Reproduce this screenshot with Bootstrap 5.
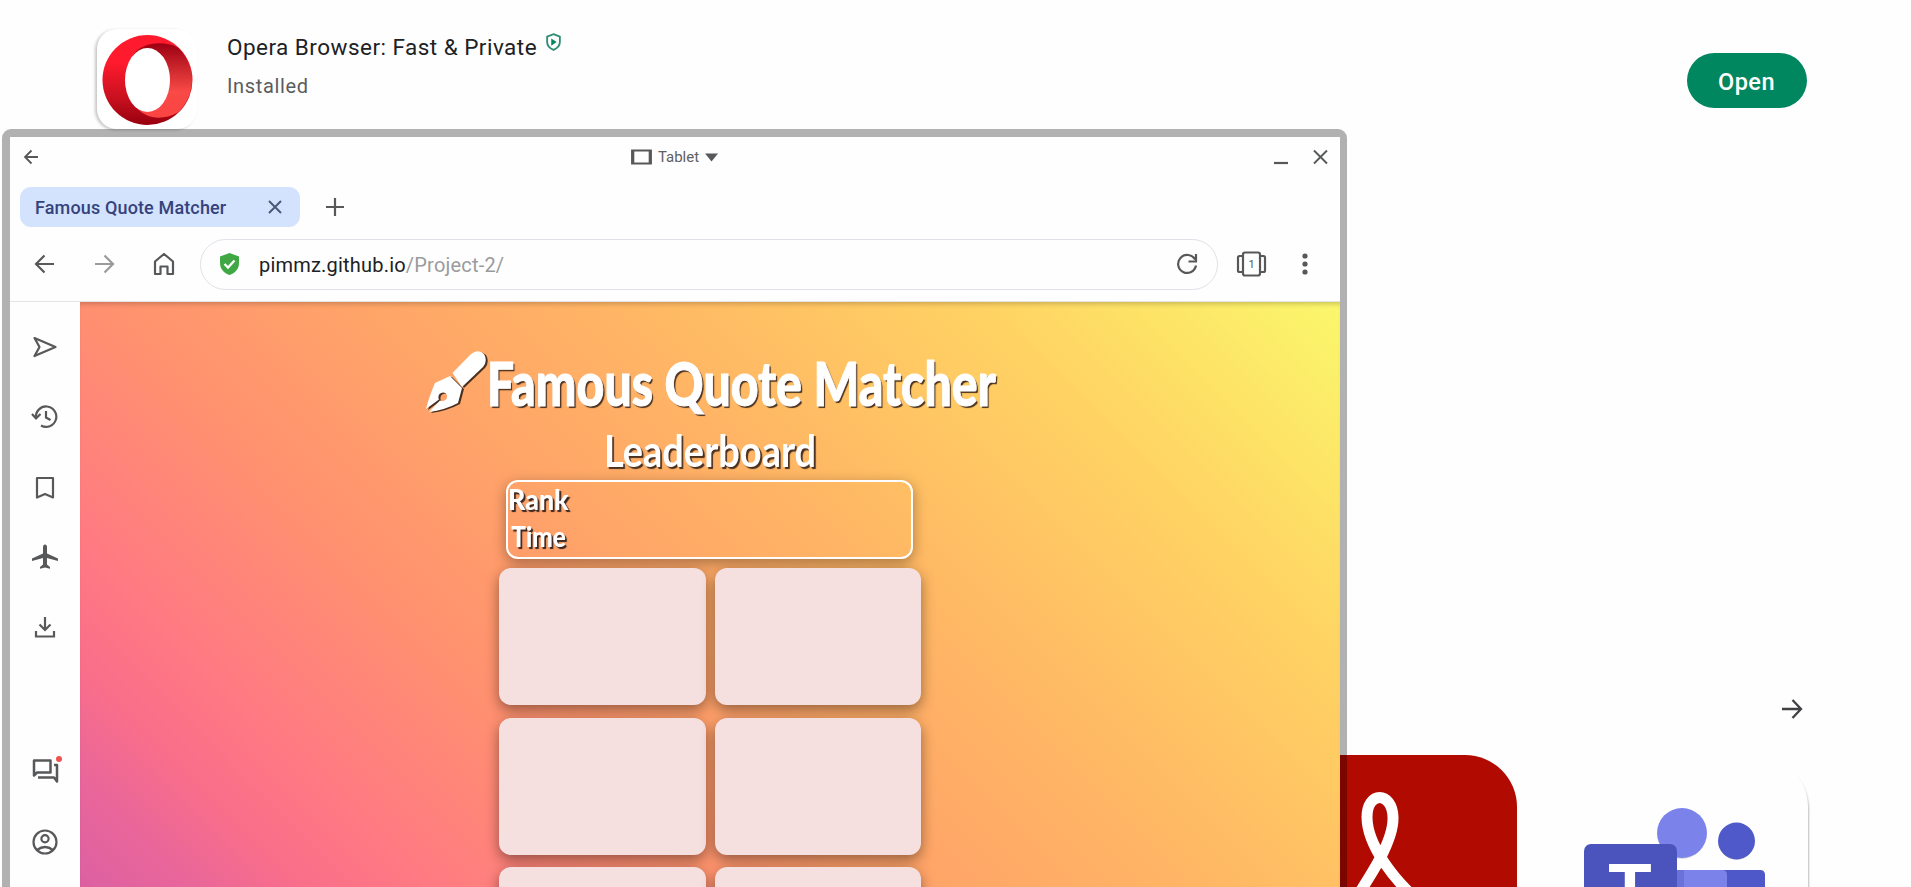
<!DOCTYPE html>
<html lang="en">
<head>
<meta charset="utf-8">
<meta name="viewport" content="width=device-width, initial-scale=1">
<title>Opera Browser: Fast &amp; Private</title>
<link href="https://cdn.jsdelivr.net/npm/bootstrap@5.3.0/dist/css/bootstrap.min.css" rel="stylesheet">
<style>
  body { background: #fefefe; font-family: Roboto, sans-serif; color: #202124; }
  svg { display: block; flex: none; }
  .ico { fill: none; stroke: #57585a; stroke-width: 2.2; }
  .store-head { padding: 29px 104px 0 97px; height: 129px; }
  .app-logo { width: 100px; height: 100px; border-radius: 20px; background: #fff; box-shadow: -2px 1px 3px rgba(0,0,0,.22); padding: 6px 5px; }
  .app-info { margin-left: 30px; }
  .app-name { font-size: 22.5px; line-height: 36px; letter-spacing: .47px; }
  .app-state { font-size: 20px; line-height: 30px; margin-top: 6px; color: #5a5c60; letter-spacing: .65px; }
  .open-btn { width: 120px; height: 55px; margin-top: 24px; border-radius: 28px; background: #01875f; color: #fff; font-size: 23.5px; font-weight: 500; letter-spacing: .5px; padding: 4px 1px 0 0; border: 0; }
  .open-btn:hover { background: #01704f; color: #fff; }
  .more { padding-right: 108px; margin-bottom: 36px; }
  .tiles { padding-right: 103px; gap: 63px; height: 132px; }
  .tile { width: 228px; height: 228px; border-radius: 52px; overflow: hidden; }
  .tile-teams { background: #fefefe; box-shadow: 2px 3px 2px -1px rgba(0,0,0,.26); }

  .win { left: 2px; top: 129px; width: 1345px; height: 780px; border: 8px solid rgba(0,0,0,.3); border-right-width: 7px; border-radius: 9px 9px 0 0; }
  .win-in { background: #fefefe; height: 100%; }
  .title-bar { height: 50px; padding: 0 12px 10px 13px; }
  .mode { font-size: 15px; color: #5f6062; gap: 6px; padding-left: 2px; }
  .tab-row { height: 40px; padding-left: 10px; gap: 26px; }
  .tab-pill { width: 280px; height: 40px; border-radius: 11px; background: #d3e3fd; color: #35427c; font-size: 18px; font-weight: 500; padding: 0 18px 0 15px; letter-spacing: .14px; }
  .nav-row { height: 75px; border-bottom: 1px solid #e4e4e6; padding: 0 32px 0 24px; }
  .url { width: 1018px; height: 51px; border: 1px solid #dfe2e8; border-radius: 26px; margin-left: 25px; padding: 0 19px 0 19px; font-size: 20px; letter-spacing: .2px; }
  .url-path { color: #9a9b9d; }
  .rail { width: 70px; }
  .rail-top { padding-top: 30px; gap: 40px; }
  .rail-low { padding-top: 114px; gap: 41px; }
  .site { height: 585px; overflow: hidden; color: #fff; font-family: Lato, sans-serif; box-shadow: inset 0 5px 5px -3px rgba(0,0,0,.2);
    background: linear-gradient(45deg, #dc60a2 0%, #e9669a 6%, #f96e8a 12%, #ff7a82 19%, #ff9070 32%, #ffa568 47%, #ffb964 63%, #ffd463 81%, #fbf26a 97%, #fbf76c 100%); }
  .squeeze { display: inline-block; white-space: nowrap; transform-origin: 0 50%; }
  .site h1 { margin: 45px 0 0 345px; font-size: 60px; font-weight: 900; line-height: 72px; height: 68px; text-shadow: 2px 2px 1px #4a3020; -webkit-text-stroke: 1px #fff; }
  .site h2 { margin: 9px 0 0 524px; font-size: 43px; font-weight: 700; line-height: 54px; text-shadow: 2px 2px 1px #4a3020; }
  .board { width: 407px; height: 79px; margin: 2px 0 0 426px; border: 2px solid #fff; border-radius: 12px; box-shadow: 0 4px 14px rgba(0,0,0,.35); font-size: 29px; font-weight: 900; line-height: 36.5px; text-shadow: 2px 2px 1px #3a2520; }
  .board > div:first-child { margin-top: -1px; }
  .deck { display: grid; grid-template-columns: 207px 206px; grid-auto-rows: 137px; gap: 12.5px 9px; margin: 9px 0 0 419px; }
  .deck div { background: #f5e0df; border-radius: 12px; box-shadow: 0 5px 14px rgba(0,0,0,.42); }
</style>
</head>
<body class="vh-100 overflow-hidden">
<main class="d-flex flex-column vh-100 position-relative overflow-hidden">
  <header class="store-head d-flex align-items-start">
    <div class="app-logo">
      <svg width="91" height="90" viewBox="0 0 91 90">
        <defs>
          <linearGradient id="oa" x1="0" y1="0" x2="0" y2="1"><stop offset=".3" stop-color="#ff1b2d"/><stop offset=".7" stop-color="#c8101f"/><stop offset="1" stop-color="#98000e"/></linearGradient>
          <linearGradient id="ob" x1="0" y1="0" x2="0" y2="1"><stop offset="0" stop-color="#9c0012"/><stop offset=".65" stop-color="#f84a46"/><stop offset="1" stop-color="#fb4442"/></linearGradient>
        </defs>
        <circle cx="45.500" cy="45" r="45" fill="url(#oa)"/>
        <path fill="url(#ob)" d="M32 19C40 8 60 5 76 12.500A45 45 0 0 1 76 77.500C60 86 44 84 34 72z"/>
        <ellipse cx="45.500" cy="45" rx="22.500" ry="32" fill="#fff"/>
      </svg>
    </div>
    <div class="app-info">
      <div class="app-name d-flex">
        <span>Opera Browser: Fast &amp; Private</span>
        <svg class="ms-2 mt-1" width="17" height="20" viewBox="0 0 17 22"><path d="M8.500 1.300L15.500 4v6c0 4-3 7-7 8.600C4.500 17 1.500 14 1.500 10V4z" fill="none" stroke="#2c8c74" stroke-width="2"/><path d="M6 6l6 4-6 4z" fill="#01875f"/></svg>
      </div>
      <div class="app-state">Installed</div>
    </div>
    <button class="btn open-btn ms-auto">Open</button>
  </header>

  <section class="mt-auto">
    <div class="more d-flex justify-content-end">
      <svg width="22" height="20" viewBox="0 0 22 20"><path d="M1 10h18M11.500 1l8.500 9-8.500 9" fill="none" stroke="#404144" stroke-width="2.300"/></svg>
    </div>
    <div class="tiles d-flex justify-content-end">
      <div class="tile">
        <svg width="228" height="228" viewBox="0 0 228 228"><rect width="228" height="228" fill="#b10a00"/><path d="M56 160C78 126 105 88 104 62C103 36 78 36 78 62C78 88 102 126 146 160" fill="none" stroke="#fff" stroke-width="11"/></svg>
      </div>
      <div class="tile tile-teams">
        <svg width="228" height="228" viewBox="0 0 228 228">
          <ellipse cx="102" cy="82" rx="23" ry="22" fill="#ddd"/><circle cx="102" cy="78" r="25" fill="#7b83eb"/>
          <circle cx="156.500" cy="88" r="17" fill="#ddd"/><circle cx="156.500" cy="86" r="18.500" fill="#5059c9"/>
          <path d="M130 115h50q5 0 5 5v60h-55z" fill="#4f58c8"/><path d="M80 115h62q5 0 5 5v60H80z" fill="#7b83eb"/>
          <rect x="84" y="115" width="20" height="60" fill="#6a72d8"/>
          <rect x="4" y="89" width="93" height="93" rx="7" fill="#4b53bc"/>
          <text x="50" y="158" text-anchor="middle" font-family="Liberation Sans, sans-serif" font-size="71" font-weight="700" fill="#fff">T</text>
        </svg>
      </div>
    </div>
  </section>

  <div class="win position-absolute">
    <div class="win-in">
      <div class="title-bar d-flex align-items-center justify-content-between">
        <svg class="ico" width="50" height="16" viewBox="0 0 50 16"><path d="M15 8H2M8.500 1.500L2 8l6.500 6.500" stroke-width="1.800"/></svg>
        <div class="mode d-flex align-items-center">
          <svg width="21" height="16" viewBox="0 0 21 16"><path d="M1 1.500h19v13H1z" fill="none" stroke="#57585a" stroke-width="1.800"/><path d="M2 1v14M19 1v14" stroke="#57585a" stroke-width="2.600"/></svg>
          <span>Tablet</span>
          <svg width="13" height="9" viewBox="0 0 13 9"><path d="M0 .5h13L6.500 8.500z" fill="#57585a"/></svg>
        </div>
        <div class="d-flex">
          <svg class="ico" width="14" height="16" viewBox="0 0 14 16"><path d="M0 14h14"/></svg>
          <svg class="ico" width="15" height="16" viewBox="0 0 15 16" style="margin-left:25px"><path d="M1 1.500l13 13M14 1.500l-13 13" stroke-width="1.900"/></svg>
        </div>
      </div>
      <div class="tab-row d-flex align-items-center">
        <div class="tab-pill d-flex align-items-center justify-content-between">
          <span>Famous Quote Matcher</span>
          <svg width="14" height="14" viewBox="0 0 14 14"><path d="M1 1l12 12M13 1L1 13" stroke="#4d5878" stroke-width="2"/></svg>
        </div>
        <svg class="ico" width="18" height="18" viewBox="0 0 18 18"><path d="M9 0v18M0 9h18"/></svg>
      </div>
      <div class="nav-row d-flex align-items-center">
        <svg class="ico" width="20" height="20" viewBox="0 0 20 20"><path d="M20 10H2M10.500 1.500L2 10l8.500 8.500"/></svg>
        <svg class="ico" width="20" height="20" viewBox="0 0 20 20" style="margin-left:41px;opacity:.6"><path d="M0 10h18M9.500 1.500L18 10l-8.500 8.500"/></svg>
        <svg class="ico" width="22" height="24" viewBox="0 0 22 24" style="margin-left:38px"><path d="M2 9.500L11 2l9 7.500V22h-5.500v-7.500h-7V22H2z" stroke-linejoin="round"/></svg>
        <div class="url d-flex align-items-center">
          <svg width="19" height="22" viewBox="0 0 19 22"><path d="M9.500 0L19 3.500V10c0 6-4 10-9.500 12C4 20 0 16 0 10V3.500z" fill="#3fa845"/><path d="M4.500 11l3.500 3.500 6.500-7" fill="none" stroke="#fff" stroke-width="2.300"/></svg>
          <span style="margin-left:20px;padding-top:2px">pimmz.github.io<span class="url-path">/Project-2/</span></span>
          <svg class="ico ms-auto" width="22" height="22" viewBox="0 0 22 22"><path d="M19 6.500A9 9 0 1 0 20 12.500M20 1v7.500h-7.500"/></svg>
        </div>
        <svg class="ico ms-auto" width="31" height="26" viewBox="0 0 31 26"><rect x="7" y="1.500" width="17" height="23" rx="2"/><path d="M7 5H3.500Q2 5 2 6.500v13Q2 21 3.500 21H7M24 5h3.500Q29 5 29 6.500v13Q29 21 27.500 21H24"/><text x="15.500" y="17" text-anchor="middle" font-size="11" fill="#57585a" stroke="none">1</text></svg>
        <svg width="6" height="22" viewBox="0 0 6 22" style="margin-left:35px"><g fill="#57585a"><circle cx="3" cy="3" r="2.600"/><circle cx="3" cy="11" r="2.600"/><circle cx="3" cy="19" r="2.600"/></g></svg>
      </div>
      <div class="d-flex">
        <nav class="rail flex-shrink-0">
          <div class="rail-top d-flex flex-column align-items-center">
            <svg class="ico" width="30" height="30" viewBox="0 0 30 30"><path d="M4.500 6L25.500 15 4.500 24l5-9z" stroke-linejoin="round"/></svg>
            <svg class="ico" width="30" height="30" viewBox="0 0 30 30"><path d="M6 16a10.200 10.200 0 1 1 5 7.500M2 12l4 4.500 4.500-4.500M16 9v6.500l4.500 2.500"/></svg>
            <svg class="ico" width="30" height="30" viewBox="0 0 30 30"><path d="M7 6h16v19.500L15 22l-8 3.500z" stroke-linejoin="round"/></svg>
            <svg width="30" height="30" viewBox="0 0 30 30"><path d="M15 2.500q2 0 2 3v6l11 5V19L17 16v6.500l3 2.500v1.800l-5-1.300-5 1.300V25l3-2.500V16L2 19v-2.500l11-5v-6q0-3 2-3z" fill="#57585a"/></svg>
            <svg class="ico" width="30" height="30" viewBox="0 0 30 30"><path d="M15 5v12M9.500 12.500l5.500 5.500 5.500-5.500M6 19v5.500h18V19"/></svg>
          </div>
          <div class="rail-low d-flex flex-column align-items-center">
            <svg class="ico overflow-visible" width="30" height="30" viewBox="0 0 30 30"><path d="M4 4.500h16.500v12H7L4 19.500zM8 21.500h16l3 4V9h-3" stroke-linejoin="round" stroke-width="2.500"/><circle cx="29" cy="3" r="3" fill="#f0524f" stroke="none"/></svg>
            <svg class="ico" width="30" height="30" viewBox="0 0 30 30"><circle cx="15" cy="15" r="11.500"/><circle cx="15" cy="11.800" r="3.600"/><path d="M7 23q8-6 16 0"/></svg>
          </div>
        </nav>
        <div class="site flex-grow-1">
          <h1 class="d-flex align-items-start">
            <svg class="overflow-visible" width="62" height="62" viewBox="0 0 62 62" style="margin-top:4px;filter:drop-shadow(2px 1px 0 #4a3020)"><path fill="#fff" d="M27.500 22L45 4Q53-3 59 3q4 7-1 13L37 36z"/><path fill="#fff" fill-rule="evenodd" d="M25 25l12 12-4 15Q20 59 4 61L15 49.500q4 1.500 6.500-1.500 1.500-4-1-6-3.500-1.500-6 1-2 3-.5 5.500L1 58Q4 46 10 32z"/></svg>
            <span class="squeeze" id="t1">Famous Quote Matcher</span>
          </h1>
          <h2><span class="squeeze" id="t2">Leaderboard</span></h2>
          <div class="board"><div><span class="squeeze" id="t3">Rank</span></div><div><span class="squeeze ps-1" id="t4">Time</span></div></div>
          <div class="deck"><div></div><div></div><div></div><div></div><div></div><div></div></div>
        </div>
      </div>
    </div>
  </div>
</main>
<script>
  // Condense the display lettering to its column widths
  [['t1', 509], ['t2', 212], ['t3', 61], ['t4', 58]].forEach(function (p) {
    var el = document.getElementById(p[0]);
    el.style.transform = 'scaleX(' + p[1] / el.offsetWidth + ')';
  });
</script>
<script src="https://cdn.jsdelivr.net/npm/bootstrap@5.3.0/dist/js/bootstrap.bundle.min.js"></script>
</body>
</html>
